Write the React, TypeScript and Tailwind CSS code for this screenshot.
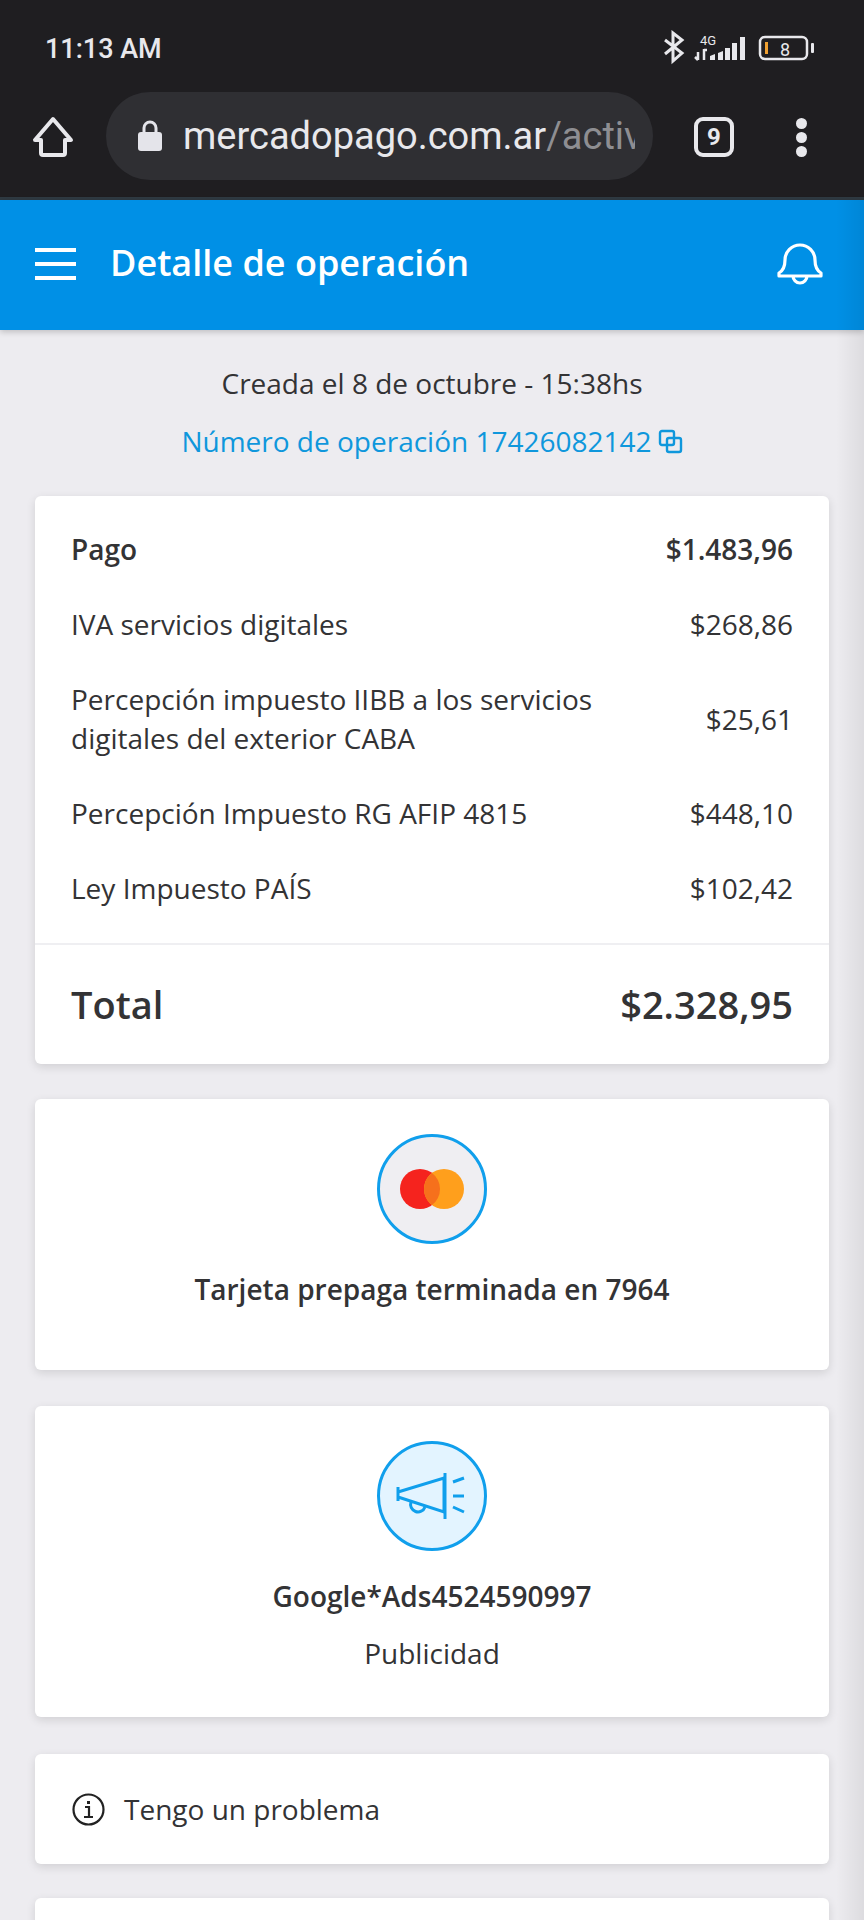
import React from "react";

const Row = ({ label, value, bold }: { label: React.ReactNode; value: string; bold?: boolean }) => (
  <div className={`flex items-center justify-between text-[28px] leading-[39px] text-[#333335] ${bold ? "font-semibold" : ""}`}>
    <span className="max-w-[560px]">{label}</span>
    <span>{value}</span>
  </div>
);

const Card = ({ className = "", children }: { className?: string; children: React.ReactNode }) => (
  <div className={`bg-white rounded-[6px] shadow-[0_3px_10px_rgba(0,0,0,0.12)] ${className}`}>{children}</div>
);

export default function App() {
  return (
    <div className="relative w-[864px] h-[1920px] overflow-hidden bg-[#edecf0] font-['Open_Sans',sans-serif]">
      <div className="h-[200px] bg-[#1f1e21] border-b-[3px] border-[#2f3a42] flex flex-col font-['Roboto',sans-serif] text-[#e8e8ec]">
        <div className="h-[92px] pt-[31px] pl-[45px] pr-[44px] flex items-start justify-between">
          <span className="text-[27px] leading-[36px] font-medium">11:13 AM</span>
          <svg width="160" height="36" viewBox="0 0 160 36" className="-mt-[1px]">
            <path d="M5 10 L22 23 L13 31 V3 L22 10 L5 24" fill="none" stroke="#e8e8ec" strokeWidth="3" />
            <text x="40" y="15" fontSize="13" fill="#e8e8ec" fontFamily="Roboto">4G</text>
            <path d="M38 22v8M35 27l3 3M44 19v11M44 20h3" stroke="#e8e8ec" strokeWidth="2.5" fill="none" />
            <path d="M50 26l5-2v6h-5zM58 23l5-2v9h-5zM65 18h5v12h-5zM72 13h5v17h-5zM80 7h5v23h-5z" fill="#e8e8ec" />
            <rect x="100" y="7" width="47" height="22" rx="5" fill="none" stroke="#e8e8ec" strokeWidth="2.5" />
            <rect x="105" y="12" width="3" height="12" fill="#f0a030" />
            <text x="120" y="26" fontSize="18" fill="#e8e8ec" fontFamily="Roboto">8</text>
            <rect x="151" y="13" width="3" height="10" rx="1" fill="#e8e8ec" />
          </svg>
        </div>
        <div className="flex-1 flex items-start pt-0">
          <svg width="106" height="90" viewBox="0 0 106 90" className="shrink-0">
            <path d="M53 27 L71 48 H65 V61 Q65 63 63 63 H43 Q41 63 41 61 V48 H35 Z" fill="none" stroke="#e8e8ec" strokeWidth="4" strokeLinejoin="round" />
          </svg>
          <div className="w-[547px] h-[88px] rounded-[44px] bg-[#2f2f33] flex items-center pl-[31px] pr-[16px]">
            <svg width="26" height="32" viewBox="0 0 26 32" className="shrink-0">
              <rect x="1" y="12" width="24" height="19" rx="3" fill="#e4e4ea" />
              <path d="M7 13V8a6 6 0 0 1 12 0v5" fill="none" stroke="#e4e4ea" strokeWidth="3" />
            </svg>
            <div className="ml-[20px] text-[38px] leading-[46px] whitespace-nowrap overflow-hidden w-[452px]">
              mercadopago.com.ar<span className="text-[#8e8e92]">/actividad</span>
            </div>
          </div>
          <div className="w-[40px] h-[40px] ml-[41px] mt-[25px] rounded-[9px] border-[4px] border-[#e8e8ec] flex items-center justify-center text-[24px] font-bold">9</div>
          <div className="ml-[62px] mt-[26px] flex flex-col gap-[3px]">
            <span className="w-[11px] h-[11px] rounded-full bg-[#e8e8ec]"></span>
            <span className="w-[11px] h-[11px] rounded-full bg-[#e8e8ec]"></span>
            <span className="w-[11px] h-[11px] rounded-full bg-[#e8e8ec]"></span>
          </div>
        </div>
      </div>

      <header className="h-[130px] bg-[#0090e6] shadow-[0_2px_6px_rgba(0,0,0,0.2)] flex items-center pl-[35px] pr-[40px] text-white">
        <div className="w-[41px] flex flex-col gap-[10px] -mt-[3px]">
          <span className="h-[4px] bg-white"></span>
          <span className="h-[4px] bg-white"></span>
          <span className="h-[4px] bg-white"></span>
        </div>
        <h1 className="ml-[34px] text-[36px] leading-[46px] font-semibold flex-1 -mt-[4px]">Detalle de operación</h1>
        <svg width="48" height="48" viewBox="0 0 48 48">
          <path d="M3 35v-3c5-3 6-8 6-13a15 15 0 0 1 30 0c0 5 1 10 6 13v3z M17 35a7 7 0 0 0 14 0" fill="none" stroke="#fff" strokeWidth="3.2" strokeLinejoin="round" />
        </svg>
      </header>

      <main className="px-[35px] pt-[33px]">
        <p className="text-center text-[28px] leading-[40px] text-[#333335]">Creada el 8 de octubre - 15:38hs</p>
        <p className="mt-[18px] text-center text-[28px] leading-[40px] text-[#0f97dc] flex items-center justify-center gap-[6px]">
          Número de operación 17426082142
          <svg width="25" height="25" viewBox="0 0 25 25">
            <rect x="2" y="2" width="14" height="14" rx="2" fill="none" stroke="#0f97dc" strokeWidth="2.4" />
            <rect x="9" y="9" width="14" height="14" rx="2" fill="none" stroke="#0f97dc" strokeWidth="2.4" />
          </svg>
        </p>

        <Card className="mt-[35px]">
          <div className="h-[447px] px-[36px] pt-[34px] flex flex-col gap-[36px]">
            <Row label="Pago" value="$1.483,96" bold />
            <Row label="IVA servicios digitales" value="$268,86" />
            <Row label="Percepción impuesto IIBB a los servicios digitales del exterior CABA" value="$25,61" />
            <Row label="Percepción Impuesto RG AFIP 4815" value="$448,10" />
            <Row label="Ley Impuesto PAÍS" value="$102,42" />
          </div>
          <div className="h-[2px] bg-[#efeff2]"></div>
          <div className="h-[119px] px-[36px] flex items-center justify-between text-[38px] font-semibold text-[#333335]">
            <span>Total</span>
            <span>$2.328,95</span>
          </div>
        </Card>

        <Card className="mt-[35px] h-[271px] flex flex-col items-center pt-[35px]">
          <div className="w-[110px] h-[110px] rounded-full border-[3px] border-[#109fec] bg-[#efeef2] flex items-center justify-center">
            <svg width="66" height="42" viewBox="0 0 66 42">
              <circle cx="21" cy="21" r="20" fill="#f5231e" />
              <circle cx="45" cy="21" r="20" fill="#ff9f1c" />
              <path d="M33 5a20 20 0 0 1 0 32a20 20 0 0 1 0-32z" fill="#f6701c" />
            </svg>
          </div>
          <p className="mt-[25px] text-[28px] leading-[40px] font-semibold text-[#333335]">Tarjeta prepaga terminada en 7964</p>
        </Card>

        <Card className="mt-[36px] h-[311px] flex flex-col items-center pt-[35px]">
          <div className="w-[110px] h-[110px] rounded-full border-[3px] border-[#109fec] bg-[#e3f4ff] flex items-center justify-center">
            <svg width="72" height="46" viewBox="0 0 72 46" fill="none" stroke="#109fec" strokeWidth="3">
              <path d="M2 14v14M2 19 48 5v34L2 24" />
              <path d="M49 0v46" />
              <path d="M15 29a7 7 0 0 0 14 5" />
              <path d="M57 9l11-4M57 23h11M57 34l11 5" />
            </svg>
          </div>
          <p className="mt-[25px] text-[28px] leading-[40px] font-semibold text-[#333335]">Google*Ads4524590997</p>
          <p className="mt-[17px] text-[28px] leading-[40px] text-[#333335]">Publicidad</p>
        </Card>

        <Card className="mt-[37px] h-[110px] flex items-center pl-[37px]">
          <svg width="33" height="33" viewBox="0 0 33 33" fill="none" stroke="#222" strokeWidth="2.2">
            <circle cx="16.5" cy="16.5" r="15" />
            <path d="M13 14h4v10M12 24h9" />
            <path d="M16.5 8v3" strokeWidth="3" />
          </svg>
          <span className="ml-[19px] text-[28px] leading-[40px] text-[#333335]">Tengo un problema</span>
        </Card>

        <Card className="mt-[34px] h-[110px]"><span></span></Card>
      </main>

      <div className="absolute top-[200px] right-0 bottom-0 w-[28px] bg-gradient-to-r from-transparent to-[rgba(0,0,0,0.07)]"></div>
    </div>
  );
}
